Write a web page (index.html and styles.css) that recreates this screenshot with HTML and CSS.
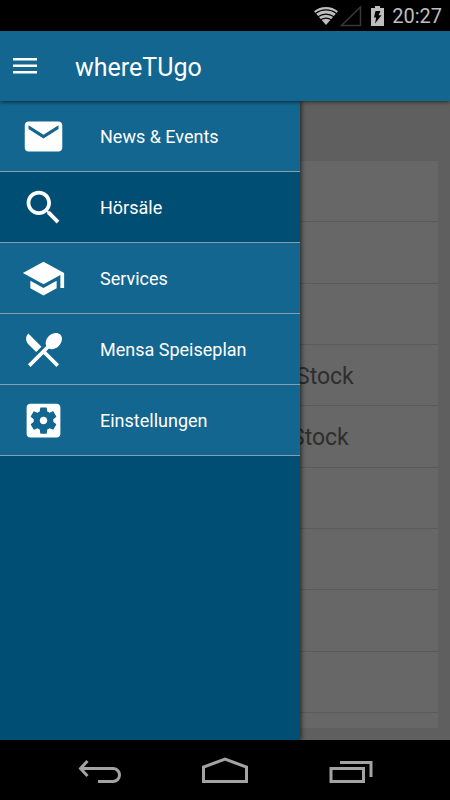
FILE: index.html
```html
<!DOCTYPE html>
<html lang="de">
<head>
<meta charset="utf-8">
<meta name="viewport" content="width=device-width, initial-scale=1">
<title>whereTUgo</title>
<link rel="stylesheet" href="styles.css">
</head>
<body>
<div class="screen">
  <div class="status">
    <svg class="status-wifi" width="24" height="18" viewBox="0 0 24 18" aria-hidden="true">
      <path class="fill" d="M12 18L0 4.200C3.300 1.500 7.500 0 12 0s8.700 1.500 12 4.200z"/>
      <g class="gap"><path d="M1.500 6.500C4.500 4.200 8 2.900 12 2.900s7.500 1.300 10.500 3.600"/><path d="M4 9.800c2.300-1.700 5-2.700 8-2.700s5.700 1 8 2.700"/><path d="M6.500 12.900c1.600-1.100 3.500-1.800 5.500-1.800s3.900.7 5.500 1.800"/></g>
    </svg>
    <svg class="status-signal" width="22" height="22" viewBox="0 0 22 22" aria-hidden="true"><path d="M1.500 20.500H20.500V2z"/></svg>
    <svg class="status-battery" width="13" height="20" viewBox="0 0 13 20" aria-hidden="true">
      <path class="fill" d="M4 0h5v2h4v18H0V2h4z"/>
      <path class="bolt" d="M4.500 5h5L7.600 9.200H10.500L4 17.500l1.200-6H3z"/>
    </svg>
    <time class="status-time">20:27</time>
  </div>

  <header class="bar">
    <button class="bar-menu" type="button" aria-label="Menu">
      <svg width="24" height="16" viewBox="0 0 24 16" aria-hidden="true"><path d="M0 0h24v2.500H0zM0 6.500h24V9H0zM0 13h24v2.500H0z"/></svg>
    </button>
    <h1 class="bar-title">whereTUgo</h1>
  </header>

  <main class="main">
    <ul class="list">
      <li></li><li></li><li></li>
      <li class="indent-wide">Stock</li>
      <li class="indent">Stock</li>
      <li></li><li></li><li></li><li></li><li></li>
    </ul>
    <nav class="drawer">
      <a class="item" href="#news">
        <svg class="icon" viewBox="0 0 24 24" aria-hidden="true"><path d="M20 4H4c-1.100 0-1.990.9-1.990 2L2 18c0 1.100.9 2 2 2h16c1.100 0 2-.9 2-2V6c0-1.100-.9-2-2-2zm0 4l-8 5-8-5V6l8 5 8-5v2z"/></svg>
        <span>News &amp; Events</span>
      </a>
      <a class="item item-active" href="#rooms">
        <svg class="icon" viewBox="0 0 24 24" aria-hidden="true"><path d="M15.500 14h-.79l-.28-.27C15.410 12.590 16 11.110 16 9.500 16 5.910 13.090 3 9.500 3S3 5.910 3 9.500 5.910 16 9.500 16c1.610 0 3.090-.59 4.230-1.570l.27.28v.79l5 4.990L20.490 19l-4.990-5zm-6 0C7.010 14 5 11.990 5 9.500S7.010 5 9.500 5 14 7.010 14 9.500 11.990 14 9.500 14z"/></svg>
        <span>Hörsäle</span>
      </a>
      <a class="item" href="#services">
        <svg class="icon" viewBox="0 0 24 24" aria-hidden="true"><path d="M5 13.180v4L12 21l7-3.820v-4L12 17l-7-3.820zM12 3L1 9l11 6 9-4.910V17h2V9L12 3z"/></svg>
        <span>Services</span>
      </a>
      <a class="item" href="#mensa">
        <svg class="icon" viewBox="0 0 24 24" aria-hidden="true"><path d="M8.100 13.340l2.830-2.830L3.910 3.500c-1.560 1.560-1.560 4.090 0 5.660l4.190 4.180zm6.780-1.810c1.530.71 3.680.21 5.270-1.380 1.910-1.910 2.280-4.650.81-6.120-1.460-1.460-4.200-1.100-6.120.81-1.590 1.590-2.090 3.740-1.380 5.270L3.700 19.870l1.410 1.410L12 14.410l6.880 6.880 1.410-1.410L13.410 13l1.470-1.470z"/></svg>
        <span>Mensa Speiseplan</span>
      </a>
      <a class="item" href="#settings">
        <svg class="icon" viewBox="0 0 24 24" aria-hidden="true"><path d="M12 10c-1.100 0-2 .9-2 2s.9 2 2 2 2-.9 2-2-.9-2-2-2zm7-7H5c-1.110 0-2 .9-2 2v14c0 1.100.89 2 2 2h14c1.110 0 2-.9 2-2V5c0-1.100-.89-2-2-2zm-1.750 9c0 .23-.02.46-.05.68l1.480 1.160c.13.11.17.3.08.45l-1.400 2.420c-.09.15-.27.21-.43.15l-1.740-.7c-.36.28-.76.51-1.180.69l-.26 1.850c-.03.17-.18.3-.35.3h-2.800c-.17 0-.32-.13-.35-.29l-.26-1.850c-.43-.18-.82-.41-1.180-.69l-1.740.7c-.16.06-.34 0-.43-.15l-1.400-2.420c-.09-.15-.05-.34.08-.45l1.480-1.160c-.03-.23-.05-.46-.05-.69 0-.23.02-.46.05-.68l-1.480-1.160c-.13-.11-.17-.3-.08-.45l1.400-2.420c.09-.15.27-.21.43-.15l1.740.7c.36-.28.76-.51 1.180-.69l.26-1.850c.03-.17.18-.3.35-.3h2.800c.17 0 .32.13.35.29l.26 1.850c.43.18.82.41 1.180.69l1.740-.7c.16-.06.34 0 .43.15l1.400 2.420c.09.15.05.34-.08.45l-1.480 1.160c.03.23.05.46.05.69z"/></svg>
        <span>Einstellungen</span>
      </a>
    </nav>
  </main>

  <div class="keys">
    <button type="button" aria-label="Zurück"><svg width="42" height="26" viewBox="0 0 42 26" aria-hidden="true"><path d="M1.500 11.500H34a6.400 6.400 0 0 1 0 13H19M8.500 4L1.500 11.500L8.500 19"/></svg></button>
    <button type="button" aria-label="Startseite"><svg width="46" height="26" viewBox="0 0 46 26" aria-hidden="true"><path d="M1.500 24.500V10L23 2.200L44.500 10V24.500z"/></svg></button>
    <button type="button" aria-label="Letzte Apps"><svg width="44" height="26" viewBox="0 0 44 26" aria-hidden="true"><path d="M3 11.500H35.500V24.500H3zM12 5.500H43V20"/></svg></button>
  </div>
</div>
</body>
</html>
```
FILE: styles.css
```css
* { box-sizing: border-box; }

body {
  margin: 0;
  background: #000;
  font-family: Roboto, "Noto Sans", sans-serif;
}

button {
  padding: 0;
  border: 0;
  background: none;
}

svg {
  display: block;
  overflow: visible;
}

.screen {
  display: grid;
  grid-template-rows: 31px 70px 1fr 60px;
  min-height: 100vh;
}

.status {
  display: flex;
  align-items: center;
  justify-content: flex-end;
  padding-right: 8px;
  color: #bebebe;
}

.status .fill { fill: #bebebe; }

.status .gap {
  fill: none;
  stroke: #000;
  stroke-width: 1.1;
}

.status-signal {
  margin: 0 9px 0 2px;
  fill: none;
  stroke: #3a3a3a;
  stroke-width: 1.5;
}

.status-battery .bolt { fill: #000; }

.status-time {
  margin-left: 8px;
  font-size: 20px;
  line-height: 30px;
}

.bar {
  position: relative;
  z-index: 2;
  display: flex;
  align-items: center;
  gap: 38px;
  padding-left: 13px;
  background: #13668f;
  box-shadow: 0 1px 4px rgba(0, 0, 0, 0.6);
  color: #fff;
}

.bar-menu svg { fill: #fff; }

.bar-title {
  margin: 0;
  padding-top: 4px;
  font-size: 25px;
  font-weight: 400;
  line-height: 32px;
}

.main {
  position: relative;
  display: grid;
  padding: 60px 12px 12px;
  background: #5f5f5f;
}

.list {
  display: grid;
  grid-template-rows: repeat(9, 1fr) 15px;
  margin: 0;
  padding: 0;
  background: #676767;
  color: #2e2e2e;
  font-size: 23px;
  list-style: none;
}

.list li {
  display: flex;
  align-items: center;
  padding-top: 2px;
  border-bottom: 1px solid #5a5a5a;
}

.list li:last-child { border-bottom: 0; }

.list .indent { padding-left: 279px; }

.list .indent-wide { padding-left: 284px; }

.drawer {
  position: absolute;
  inset: 0 auto 0 0;
  width: 300px;
  background: #014e75;
  box-shadow: 1px 0 5px rgba(0, 0, 0, 0.7);
}

.item {
  display: flex;
  align-items: center;
  gap: 34px;
  height: 71px;
  padding-left: 21px;
  border-bottom: 1px solid #8b9caf;
  background: #13668f;
  color: #fff;
  font-size: 18px;
  line-height: 24px;
  text-decoration: none;
}

.item span { padding-top: 2px; }

.item-active { background: #014e75; }

.icon {
  width: 45px;
  height: 45px;
  fill: #fff;
}

.keys {
  display: grid;
  grid-template-columns: repeat(3, 1fr);
  padding: 0 37px;
  background: #000;
}

.keys button {
  display: flex;
  align-items: center;
  justify-content: center;
}

.keys svg {
  fill: none;
  stroke: #a3a3a3;
  stroke-width: 3;
}
```
